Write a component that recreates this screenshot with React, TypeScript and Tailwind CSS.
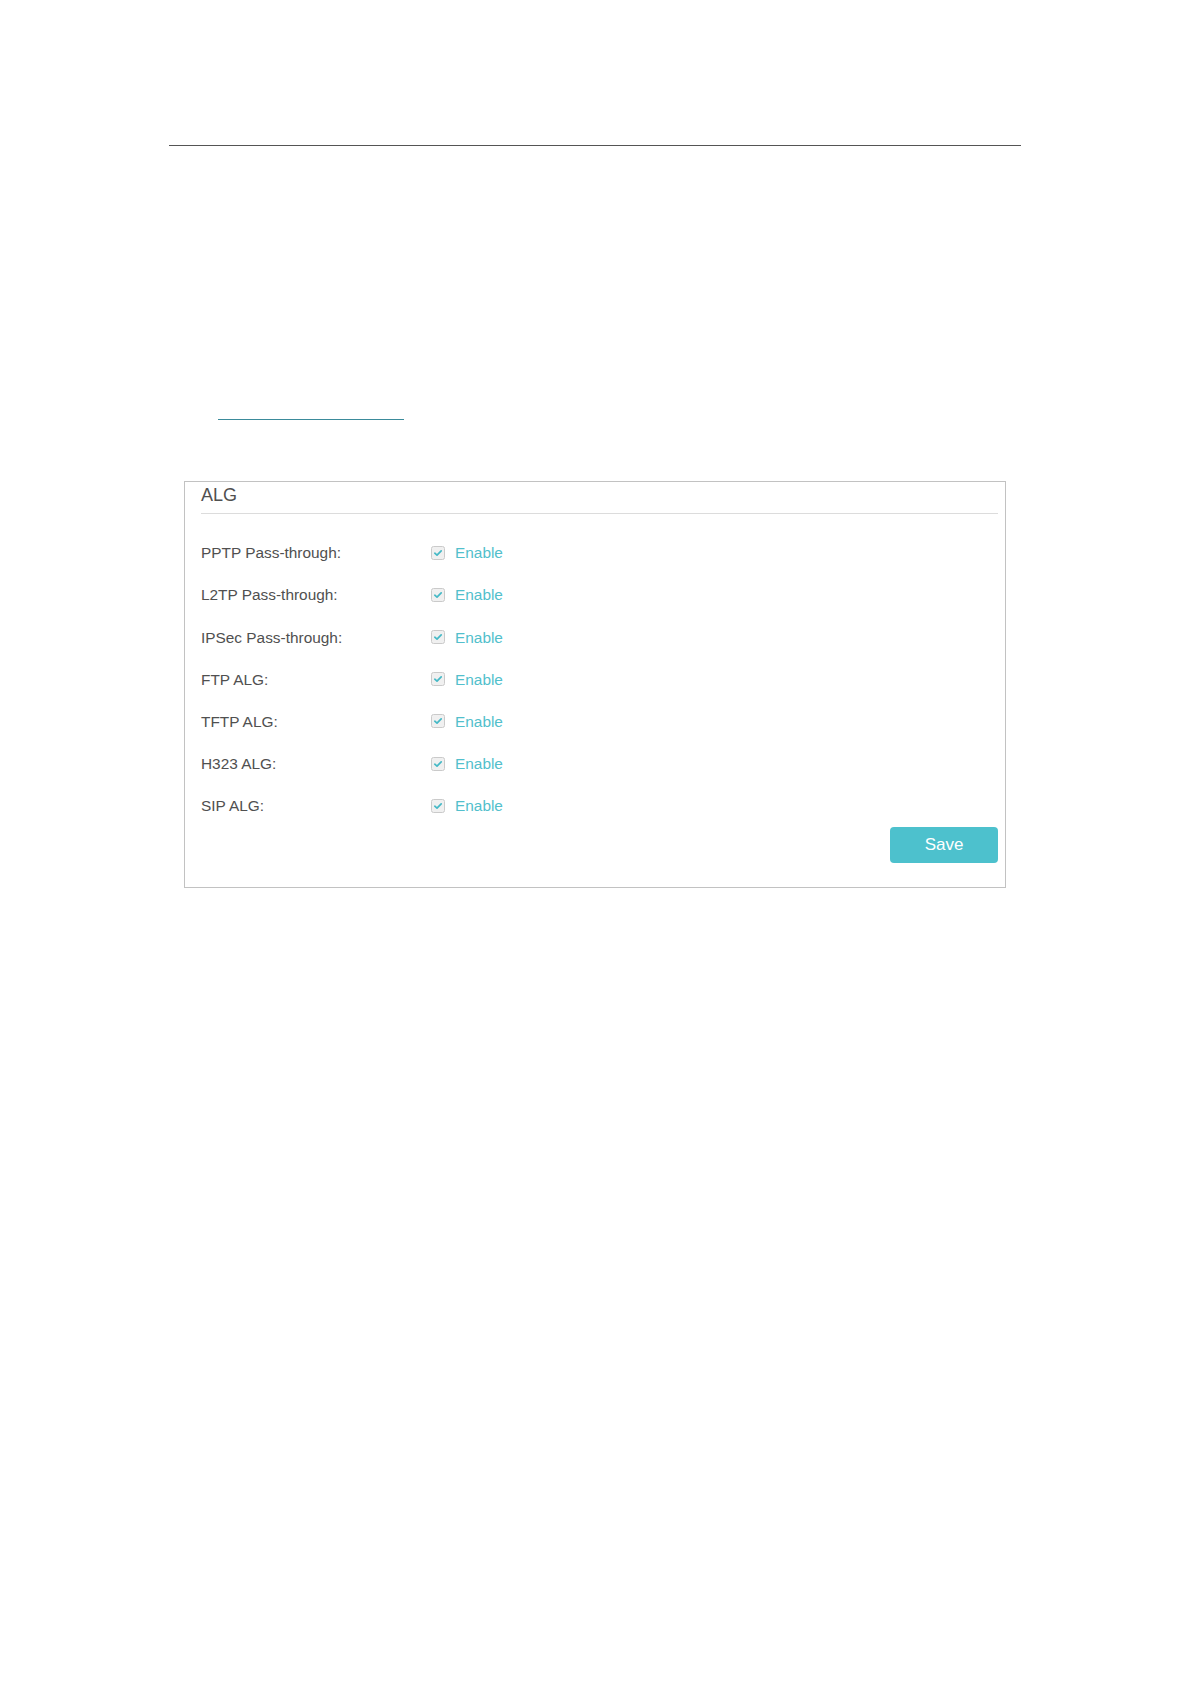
const rows = [
  "PPTP Pass-through:",
  "L2TP Pass-through:",
  "IPSec Pass-through:",
  "FTP ALG:",
  "TFTP ALG:",
  "H323 ALG:",
  "SIP ALG:",
];

function CheckBox() {
  return (
    <svg width="14" height="14" viewBox="0 0 14 14" className="shrink-0">
      <rect x="0.5" y="0.5" width="13" height="13" rx="2" fill="#f0f0f0" stroke="#cacaca" />
      <path d="M3.8 7.2 L6 9.2 L10.2 4.8" fill="none" stroke="#45b9c6" strokeWidth="1.7" strokeLinecap="round" strokeLinejoin="round" />
    </svg>
  );
}

export default function App() {
  return (
    <div className="w-full h-[1684px] bg-white font-['Liberation_Sans',Arial,sans-serif]">
      <div className="ml-[169px] w-[852px] pt-[145px]">
        <div className="h-px bg-[#555555]" />
        <div className="ml-[49px] mt-[273px] w-[186px] h-px bg-[#3b8b9b]" />
        <div className="ml-[15px] mt-[61px] w-[822px] border border-[#c2c2c2] pl-4 pr-[7px] pt-1 pb-[24px]">
          <div className="text-[18px] leading-none text-[#505050]">ALG</div>
          <div className="mt-[9px] h-px bg-[#dcdcdc]" />
          <div className="mt-[18px]">
            {rows.map((label) => (
              <div key={label} className="flex items-center h-[42.1px]">
                <div className="w-[230px] text-[15.4px] leading-none text-[#505050]">{label}</div>
                <div className="flex items-center gap-[10px]">
                  <CheckBox />
                  <span className="text-[15.4px] leading-none text-[#52bfcc]">Enable</span>
                </div>
              </div>
            ))}
          </div>
          <div className="flex justify-end">
            <button className="w-[108px] h-[36px] rounded-[4px] bg-[#4dc1cd] text-white text-[17px] leading-none">
              Save
            </button>
          </div>
        </div>
      </div>
    </div>
  );
}
